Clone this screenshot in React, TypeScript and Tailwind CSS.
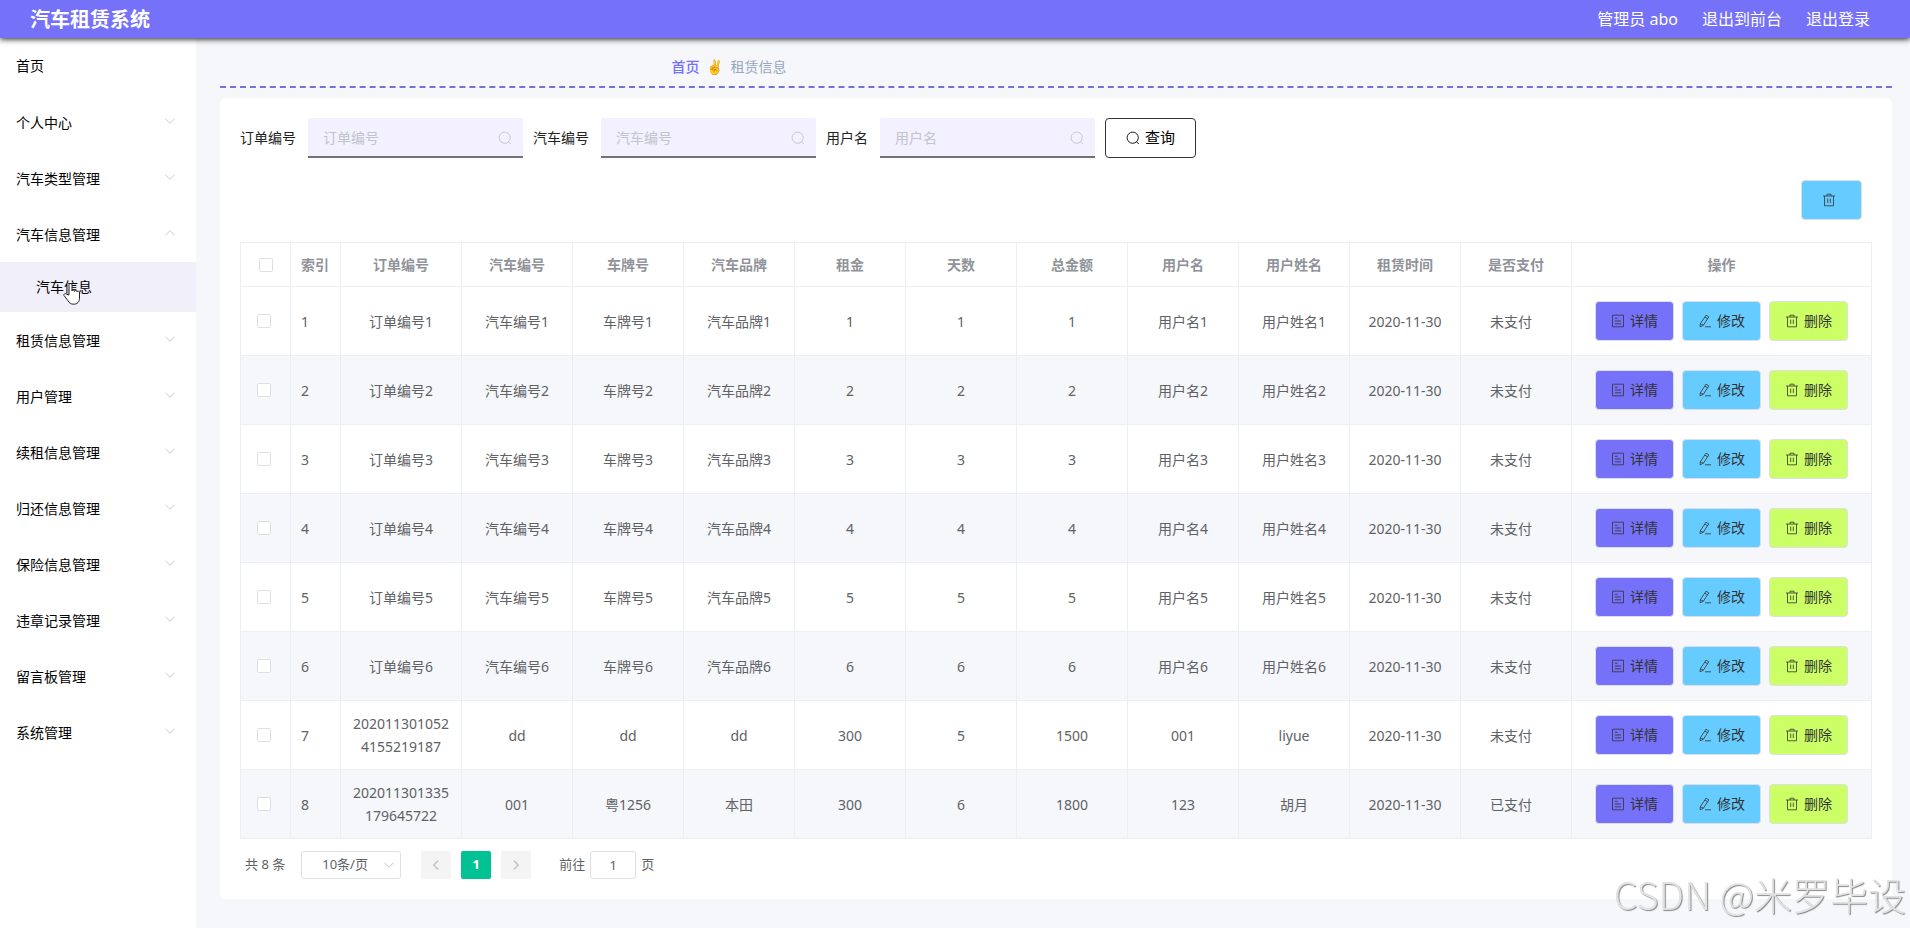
import React, { useState } from 'react';

interface MenuItem {
  title: string;
  children?: string[];
}

interface Order {
  index: number;
  cells: string[];
  paid: string;
}

interface SearchField {
  id: string;
  label: string;
}

const menus: MenuItem[] = [
  { title: '个人中心', children: [] },
  { title: '汽车类型管理', children: [] },
  { title: '汽车信息管理', children: ['汽车信息'] },
  { title: '租赁信息管理', children: [] },
  { title: '用户管理', children: [] },
  { title: '续租信息管理', children: [] },
  { title: '归还信息管理', children: [] },
  { title: '保险信息管理', children: [] },
  { title: '违章记录管理', children: [] },
  { title: '留言板管理', children: [] },
  { title: '系统管理', children: [] },
];

const fields: SearchField[] = [
  { id: 'orderNo', label: '订单编号' },
  { id: 'carNo', label: '汽车编号' },
  { id: 'userName', label: '用户名' },
];

const columns = [
  '订单编号', '汽车编号', '车牌号', '汽车品牌', '租金', '天数',
  '总金额', '用户名', '用户姓名', '租赁时间', '是否支付',
];

const orders: Order[] = [
  ...[1, 2, 3, 4, 5, 6].map((n) => ({
    index: n,
    cells: [
      `订单编号${n}`, `汽车编号${n}`, `车牌号${n}`, `汽车品牌${n}`, `${n}`, `${n}`,
      `${n}`, `用户名${n}`, `用户姓名${n}`, '2020-11-30',
    ],
    paid: '未支付',
  })),
  {
    index: 7,
    cells: ['2020113010524155219187', 'dd', 'dd', 'dd', '300', '5', '1500', '001', 'liyue', '2020-11-30'],
    paid: '未支付',
  },
  {
    index: 8,
    cells: ['202011301335179645722', '001', '粤1256', '本田', '300', '6', '1800', '123', '胡月', '2020-11-30'],
    paid: '已支付',
  },
];

const iconProps = {
  viewBox: '0 0 14 14',
  fill: 'none',
  stroke: 'currentColor',
  className: 'w-3.5 h-3.5 shrink-0',
  'aria-hidden': true,
};

const SearchIcon = () => (
  <svg {...iconProps}>
    <circle cx="6.7" cy="6.7" r="5.6" strokeWidth="0.9" />
    <path d="M10.4 10.6 12.8 13" strokeWidth="0.9" />
  </svg>
);

const TrashIcon = () => (
  <svg {...iconProps}>
    <path d="M1 3h12M2.500 3v9.800h9V3M5 3V1.200h4V3M5.700 5.600v4.400M8.300 5.600v4.400" strokeWidth="0.8" />
  </svg>
);

const DocumentIcon = () => (
  <svg {...iconProps}>
    <path d="M1.5 1.2h11v11.6h-11zM4 4.300h2.500M4 7h6M4 9.800h6" strokeWidth="0.8" />
  </svg>
);

const EditIcon = () => (
  <svg {...iconProps}>
    <path d="M8 1.200 10.800 2.800 5.400 11.200 2 12.800 2.300 9.800zM6.900 3.200 9.600 4.800M2.300 9.800 5.400 11.200M7 12.800h6" strokeWidth="0.8" />
  </svg>
);

const Chevron: React.FC<{ className?: string }> = ({ className }) => (
  <svg viewBox="0 0 12 12" fill="none" stroke="currentColor" className={className} aria-hidden="true">
    <path d="M1.5 3.8 6 8.2l4.5-4.4" />
  </svg>
);

const HandCursor = () => (
  <svg
    viewBox="0 0 18 24"
    className="absolute left-[63px] top-5 w-[18px] h-6 pointer-events-none"
    fill="white"
    stroke="#222"
    strokeLinejoin="round"
    aria-hidden="true"
  >
    <path d="M6 13V3.2C6 1 9 1 9 3.2V9c0-1.4 2.6-1.3 2.6.3 0-1.2 2.5-1 2.5.5 0-1 2.4-.8 2.4 1v5.4c0 3.4-2 6-5.8 6-3 0-4.4-1.2-5.6-3.4L1 13.600c-.8-1.600 1.200-2.600 2.400-1.400z" />
  </svg>
);

const Header = () => (
  <header className="relative z-10 flex items-center justify-between h-[38px] pl-[30px] pr-10 bg-[#7571f9] text-white shadow-[0_1px_6px_rgba(0,0,0,0.9)]">
    <h1 className="pt-0.5 text-xl font-bold leading-8">汽车租赁系统</h1>
    <nav className="flex gap-6 text-base leading-9">
      <span>管理员 abo</span>
      <a href="#front">退出到前台</a>
      <a href="#logout">退出登录</a>
    </nav>
  </header>
);

const Sidebar = () => {
  const [opened, setOpened] = useState('汽车信息管理');

  return (
    <aside className="w-[196px] shrink-0 bg-white text-sm text-black">
      <a href="#home" className="flex items-center h-14 px-4">首页</a>
      {menus.map((menu) => {
        const isOpen = opened === menu.title;
        return (
          <div key={menu.title}>
            <button
              type="button"
              aria-expanded={isOpen}
              onClick={() => setOpened(isOpen ? '' : menu.title)}
              className="flex items-center justify-between w-full h-14 pt-0.5 pl-4 pr-5"
            >
              {menu.title}
              <Chevron className={isOpen ? 'w-3 h-3 mb-1 text-[#ccc] rotate-180' : 'w-3 h-3 mb-1 text-[#ccc]'} />
            </button>
            {isOpen && menu.children?.map((child) => (
              <a key={child} href="#car" className="relative flex items-center h-[50px] pl-9 bg-[#f1eff9]">
                {child}
                <HandCursor />
              </a>
            ))}
          </div>
        );
      })}
    </aside>
  );
};

const SearchBar = () => (
  <form className="flex flex-wrap items-center gap-2.5 text-sm text-[#222]" onSubmit={(e) => e.preventDefault()}>
    {fields.map((field) => (
      <div key={field.id} className="flex items-center gap-3">
        <label htmlFor={field.id}>{field.label}</label>
        <div className="relative">
          <input
            id={field.id}
            type="text"
            placeholder={field.label}
            className="block w-[215px] h-10 pl-[15px] pr-8 bg-[#f3f0ff] border-b-2 border-[#73707c] rounded-t-xs outline-none placeholder:text-[#c0c4cc]"
          />
          <span className="absolute right-[11px] top-[13px] text-[#c0c4cc]">
            <SearchIcon />
          </span>
        </div>
      </div>
    ))}
    <button type="submit" className="flex items-center gap-[5px] h-10 px-5 bg-white border border-[#333] rounded text-[15px] text-black">
      <SearchIcon />
      查询
    </button>
  </form>
);

const rowButton = 'flex items-center gap-[5px] h-10 px-[15px] border border-[#dcdfe6] rounded text-[#333] leading-none';

const RowActions = () => (
  <div className="flex justify-center gap-2">
    <button type="button" className={`${rowButton} bg-[#7571f9]`}>
      <DocumentIcon />
      详情
    </button>
    <button type="button" className={`${rowButton} bg-[#66ccff]`}>
      <EditIcon />
      修改
    </button>
    <button type="button" className={`${rowButton} bg-[#ccff66]`}>
      <TrashIcon />
      删除
    </button>
  </div>
);

const checkboxStyle = 'block w-3.5 h-3.5 appearance-none bg-white border border-[#dcdfe6] rounded-xs checked:bg-[#00c292]';
const cell = 'border-r border-b border-[#ebeef5]';

const OrderTable = () => {
  const [selected, setSelected] = useState<number[]>([]);
  const allChecked = selected.length === orders.length;

  const toggle = (index: number) => {
    setSelected(selected.includes(index) ? selected.filter((i) => i !== index) : [...selected, index]);
  };

  return (
    <table className="w-full table-fixed border-separate border-spacing-0 border-l border-t border-[#ebeef5] text-sm leading-[23px] text-[#606266]">
      <colgroup>
        <col className="w-[50px]" />
        <col className="w-[50px]" />
        <col className="w-[121px]" />
        {columns.slice(1).map((name) => <col key={name} />)}
        <col className="w-[300px]" />
      </colgroup>
      <thead>
        <tr className="h-11 text-[#909399]">
          <th className={cell}>
            <input
              type="checkbox"
              aria-label="全选"
              checked={allChecked}
              onChange={() => setSelected(allChecked ? [] : orders.map((o) => o.index))}
              className={`${checkboxStyle} mx-auto`}
            />
          </th>
          <th className={`${cell} px-2.5 text-left whitespace-nowrap`}>索引</th>
          {columns.map((name) => <th key={name} className={`${cell} px-2.5`}>{name}</th>)}
          <th className={cell}>操作</th>
        </tr>
      </thead>
      <tbody>
        {orders.map((order) => (
          <tr key={order.index} className="h-[69px] even:bg-[#f5f7fa]">
            <td className={`${cell} pl-4`}>
              <input
                type="checkbox"
                aria-label={`选择${order.index}`}
                checked={selected.includes(order.index)}
                onChange={() => toggle(order.index)}
                className={checkboxStyle}
              />
            </td>
            <td className={`${cell} px-2.5`}>{order.index}</td>
            {order.cells.map((text, i) => (
              <td key={i} className={`${cell} px-2.5 text-center break-all`}>{text}</td>
            ))}
            <td className={`${cell} pl-2.5 pr-5 text-center`}>{order.paid}</td>
            <td className={cell}>
              <RowActions />
            </td>
          </tr>
        ))}
      </tbody>
    </table>
  );
};

const Pagination = () => (
  <div className="flex items-center mt-3 pl-[5px] h-7 text-[13px] text-[#606266]">
    <span>共 8 条</span>
    <div className="relative ml-4">
      <select
        aria-label="每页条数"
        className="block w-[100px] h-7 pl-5 appearance-none bg-white border border-[#dcdfe6] rounded-[3px] text-[13px] outline-none"
      >
        <option>10条/页</option>
        <option>20条/页</option>
      </select>
      <Chevron className="absolute right-1.5 top-2 w-3 h-3 text-[#c0c4cc] pointer-events-none" />
    </div>
    <div className="flex gap-2.5 mx-5">
      <button type="button" aria-label="上一页" disabled className="flex items-center justify-center w-[30px] h-7 bg-[#f4f4f5] rounded-xs text-[#c0c4cc]">
        <Chevron className="w-3 h-3 rotate-90 stroke-[1.5]" />
      </button>
      <button type="button" className="w-[30px] h-7 bg-[#00c292] rounded-xs font-bold text-white">1</button>
      <button type="button" aria-label="下一页" disabled className="flex items-center justify-center w-[30px] h-7 bg-[#f4f4f5] rounded-xs text-[#c0c4cc]">
        <Chevron className="w-3 h-3 -rotate-90 stroke-[1.5]" />
      </button>
    </div>
    <label htmlFor="jump" className="ml-2">前往</label>
    <input
      id="jump"
      type="text"
      defaultValue="1"
      className="w-[46px] h-7 mx-[5px] bg-white border border-[#dcdfe6] rounded-[3px] text-center outline-none"
    />
    <span>页</span>
  </div>
);

const App = () => (
  <div className="flex flex-col min-h-screen bg-[#f5f7fa] font-['Noto_Sans','Noto_Sans_CJK_SC',sans-serif]">
    <Header />
    <div className="flex flex-1">
      <Sidebar />
      <main className="flex-1 min-w-0 pl-6 pr-[18px] pb-7">
        {/* Breadcrumb */}
        <div className="h-[50px] pt-[18px] pl-[27%] border-b-2 border-dashed border-[#7571d9] text-sm leading-[22px]">
          <a href="#home" className="font-medium text-[#7571f9]">首页</a>
          <span className="mx-[7px]">✌</span>
          <span className="text-[#97a8be]">租赁信息</span>
        </div>

        <section className="mt-2.5 p-5 bg-white rounded-md">
          <SearchBar />
          <div className="flex justify-end my-[22px] pr-2.5">
            <button
              type="button"
              aria-label="删除"
              className="h-10 pl-5 pr-[25px] bg-[#66ccff] border border-[#dcdfe6] rounded text-[#333]"
            >
              <TrashIcon />
            </button>
          </div>
          <OrderTable />
          <Pagination />
        </section>
      </main>
    </div>

    <div className="fixed right-1 bottom-[11px] text-[38px] leading-[46px] font-light font-['Noto_Sans_CJK_SC',sans-serif] text-[#e2e2e2] [text-shadow:1px_1px_1px_#888] pointer-events-none">
      CSDN @米罗毕设
    </div>
  </div>
);

export default App;
